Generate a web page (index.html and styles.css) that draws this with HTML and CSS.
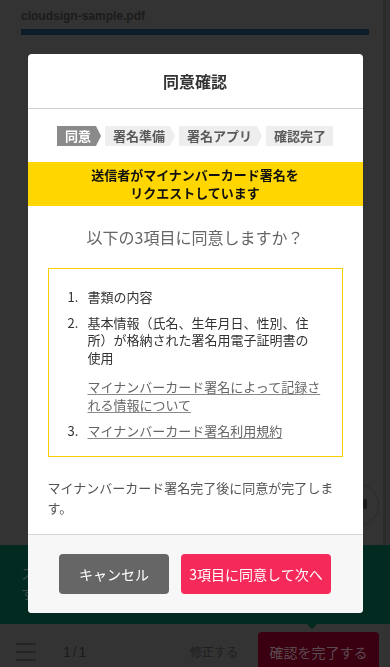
FILE: index.html
```html
<!DOCTYPE html>
<html lang="ja">
<head>
<meta charset="utf-8">
<meta name="viewport" content="width=device-width, initial-scale=1">
<title>同意確認</title>
<link rel="stylesheet" href="styles.css">
</head>
<body>
<div class="app">
  <header class="doc-head">
    <div class="doc-name">cloudsign-sample.pdf</div>
    <div class="doc-bar"></div>
  </header>
  <main class="doc-area">
    <div class="fab"></div>
  </main>
  <div class="notice">
    <p class="notice-text">スマ<br>す</p>
  </div>
  <nav class="toolbar">
    <span class="menu-icon">
      <svg width="20" height="40" viewBox="0 0 20 40"><path d="M0 12h20M0 20h20M0 28h20" stroke="#222" stroke-width="1.6" fill="none"/></svg>
    </span>
    <span class="pages">1 / 1</span>
    <span class="edit">修正する</span>
    <span class="finish">確認を完了する</span>
  </nav>
  <div class="scrollbar"></div>
</div>

<div class="overlay">
  <div class="modal">
    <div class="modal-head">
      <h2 class="modal-title">同意確認</h2>
    </div>
    <div class="modal-body">
      <ol class="steps">
        <li class="step step-active">同意</li>
        <li class="step">署名準備</li>
        <li class="step">署名アプリ</li>
        <li class="step">確認完了</li>
      </ol>
      <div class="banner">送信者がマイナンバーカード署名を<br>リクエストしています</div>
      <p class="question">以下の3項目に同意しますか？</p>
      <div class="terms">
        <ol class="terms-list">
          <li class="term"><span class="term-num">1.</span><div class="term-body"><p class="term-text">書類の内容</p></div></li>
          <li class="term"><span class="term-num">2.</span><div class="term-body"><p class="term-text">基本情報（氏名、生年月日、性別、住所）が格納された署名用電子証明書の使用</p><div class="term-extra"><a class="term-link" href="#">マイナンバーカード署名によって記録される情報について</a></div></div></li>
          <li class="term"><span class="term-num">3.</span><div class="term-body"><a class="term-link" href="#">マイナンバーカード署名利用規約</a></div></li>
        </ol>
      </div>
      <p class="note">マイナンバーカード署名完了後に同意が完了します。</p>
    </div>
    <div class="modal-foot">
      <button class="btn btn-cancel" type="button">キャンセル</button>
      <button class="btn btn-primary" type="button">3項目に同意して次へ</button>
    </div>
  </div>
</div>
</body>
</html>
```
FILE: styles.css
```css
* { box-sizing: border-box; }
html, body { margin: 0; height: 100%; }
body {
  font-family: "Noto Sans CJK JP", "Noto Sans", sans-serif;
  background: #333333;
  overflow: hidden;
}

.app {
  height: 667px;
  display: flex;
  flex-direction: column;
  position: relative;
}

.doc-head { padding: 9px 21px 0; }
.doc-name {
  font-family: "Liberation Sans", Arial, sans-serif;
  font-weight: bold;
  font-size: 12px;
  line-height: 14px;
  color: #1b1b1b;
}
.doc-bar {
  margin-top: 6px;
  height: 6px;
  background: #0b1c2a;
}

.doc-area { flex: 1; position: relative; }
.fab {
  position: absolute;
  left: 335px;
  top: 448px;
  width: 44px;
  height: 44px;
  border-radius: 50%;
  border: 1px solid #2b2b2b;
}
.fab::before {
  content: "";
  position: absolute;
  left: 27px;
  top: 15px;
  width: 4px;
  height: 10px;
  border-radius: 2px;
  background: #1a1a1a;
}

.notice {
  height: 79px;
  background: #022a20;
  position: relative;
  padding: 18px 21px 0;
}
.notice::after {
  content: "";
  position: absolute;
  left: 307px;
  bottom: -5px;
  border-top: 5px solid #022a20;
  border-left: 5px solid transparent;
  border-right: 5px solid transparent;
}
.notice-text {
  margin: 0;
  font-size: 14px;
  line-height: 20px;
  color: #3b4b46;
}

.toolbar {
  height: 43px;
  display: flex;
  align-items: flex-start;
  padding: 8px 11px 0 16px;
}
.menu-icon { display: block; width: 20px; height: 40px; }
.menu-icon svg { display: block; }
.pages {
  margin-left: 27px;
  font-family: "Liberation Sans", Arial, sans-serif;
  font-size: 14px;
  line-height: 40px;
  letter-spacing: -1px;
  color: #1c1c1c;
}
.edit {
  margin-left: auto;
  margin-right: 20px;
  font-size: 12px;
  line-height: 40px;
  color: #1f1f1f;
}
.finish {
  flex: none;
  width: 121px;
  height: 40px;
  border-radius: 4px;
  background: #3a0011;
  color: #5b4a4f;
  font-size: 14px;
  line-height: 40px;
  text-align: center;
}

.scrollbar {
  position: absolute;
  top: 0;
  right: 0;
  width: 7px;
  height: 545px;
  background: #303030;
  border-left: 3px solid #2b2b2b;
}

/* modal */
.overlay {
  position: fixed;
  inset: 0;
  display: flex;
  align-items: center;
  justify-content: center;
}
.modal {
  width: 335px;
  background: #fff;
  border-radius: 4px;
  overflow: hidden;
}
.modal-head {
  padding: 15px 0 15px;
  border-bottom: 1px solid #d0d0d0;
  text-align: center;
}
.modal-title {
  margin: 0;
  font-size: 16px;
  line-height: 24px;
  font-weight: bold;
  color: #333;
}
.modal-body { padding: 17px 0; }

.steps {
  list-style: none;
  margin: 0;
  padding: 0;
  display: flex;
  justify-content: center;
}
.step {
  position: relative;
  height: 20px;
  line-height: 20px;
  padding: 0 5px 0 8px;
  margin-right: 9px;
  background: #eeeeee;
  color: #5a5a5a;
  font-size: 13px;
  font-weight: bold;
  white-space: nowrap;
}
.step::after {
  content: "";
  position: absolute;
  top: 0;
  right: -5px;
  border-left: 5px solid #eeeeee;
  border-top: 10px solid transparent;
  border-bottom: 10px solid transparent;
}
.step:last-child { margin-right: 0; padding-right: 7px; }
.step:last-child::after { display: none; }
.step-active { background: #8a8a8a; color: #fff; }
.step-active::after { border-left-color: #8a8a8a; }

.banner {
  margin-top: 16px;
  padding: 4px 10px;
  background: #ffd600;
  text-align: center;
  font-size: 13px;
  font-weight: bold;
  line-height: 18px;
  color: #111;
}

.question {
  margin: 19px 0;
  text-align: center;
  font-size: 16px;
  line-height: 24px;
  color: #666;
}

.terms {
  margin: 0 20px;
  border: 1px solid #f5d000;
  padding: 19px 14px 17px 19px;
}
.terms-list { list-style: none; margin: 0; padding: 0; }
.term {
  display: flex;
  font-size: 13px;
  line-height: 1.35;
  color: #333;
}
.term + .term { margin-top: 8.5px; }
.term-num { flex: none; width: 20px; }
.term-body { flex: 1; min-width: 0; }
.term-text { margin: 0; max-width: 232px; }
.term-extra { margin-top: 11.5px; }
.term-link {
  color: #666;
  text-decoration: underline;
  text-decoration-color: #8a8a8a;
  text-underline-offset: 2px;
}

.note {
  margin: 21px 20px 0;
  font-size: 13px;
  line-height: 19.5px;
  color: #555;
}

.modal-foot {
  display: flex;
  justify-content: center;
  gap: 12px;
  padding: 19px 0;
  background: #f7f7f7;
  border-top: 1px solid #d6d6d6;
}
.btn {
  height: 40px;
  padding: 0;
  border: 0;
  border-radius: 4px;
  font-family: inherit;
  font-size: 14px;
  color: #fff;
  cursor: pointer;
}
.btn-cancel { width: 110px; background: #666666; }
.btn-primary { width: 150px; background: #f52a5b; }
```
